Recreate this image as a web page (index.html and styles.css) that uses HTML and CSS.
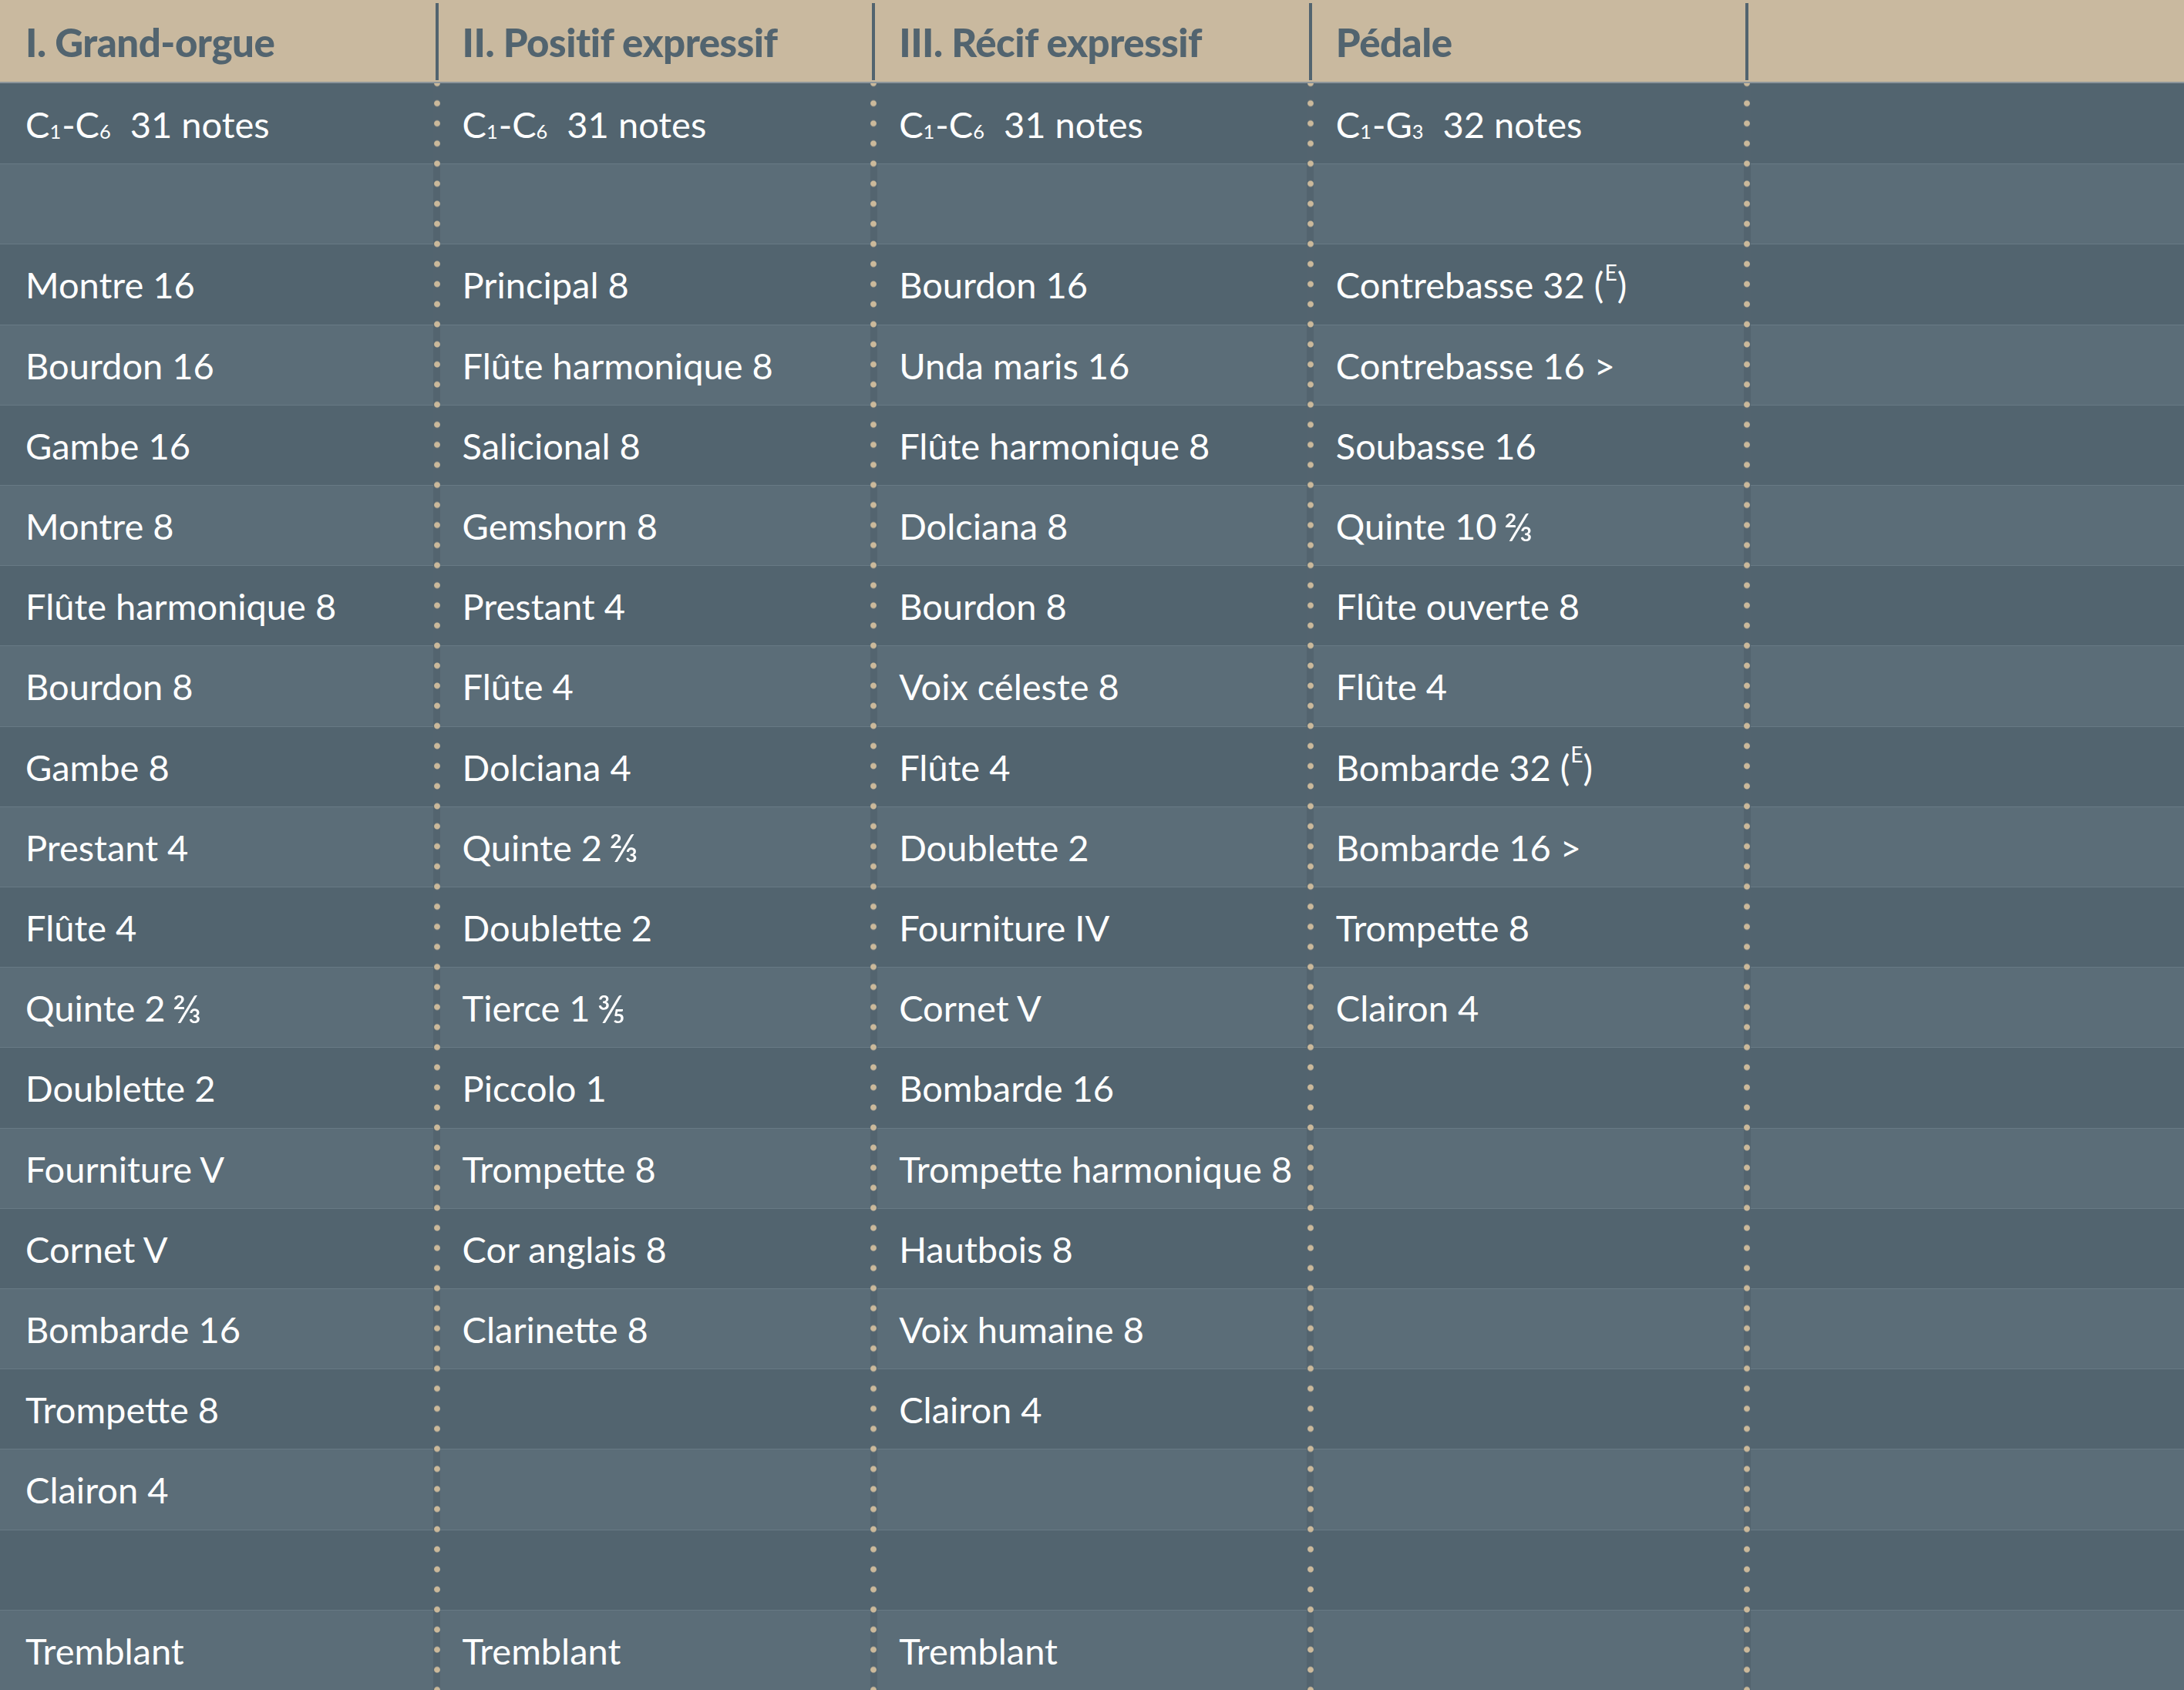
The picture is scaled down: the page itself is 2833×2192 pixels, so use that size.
FILE: index.html
```html
<!DOCTYPE html>
<html lang="fr">
<head>
<meta charset="utf-8">
<title>Composition de l'orgue</title>
<link rel="stylesheet" href="styles.css">
</head>
<body>
<div class="organ">
  <div class="head">
    <div class="hcell">I. Grand-orgue</div>
    <div class="hcell">II. Positif expressif</div>
    <div class="hcell">III. Récif expressif</div>
    <div class="hcell">Pédale</div>
    <div class="hcell"></div>
  </div>
  <div class="stops">
    <div class="row"><div class="cell">C<sub>1</sub>-C<sub>6</sub>&nbsp; 31 notes</div><div class="cell">C<sub>1</sub>-C<sub>6</sub>&nbsp; 31 notes</div><div class="cell">C<sub>1</sub>-C<sub>6</sub>&nbsp; 31 notes</div><div class="cell">C<sub>1</sub>-G<sub>3</sub>&nbsp; 32 notes</div><div class="cell"></div></div>
    <div class="row"><div class="cell"></div><div class="cell"></div><div class="cell"></div><div class="cell"></div><div class="cell"></div></div>
    <div class="row"><div class="cell">Montre 16</div><div class="cell">Principal 8</div><div class="cell">Bourdon 16</div><div class="cell">Contrebasse 32 (<sup>E</sup>)</div><div class="cell"></div></div>
    <div class="row"><div class="cell">Bourdon 16</div><div class="cell">Flûte harmonique 8</div><div class="cell">Unda maris 16</div><div class="cell">Contrebasse 16 &gt;</div><div class="cell"></div></div>
    <div class="row"><div class="cell">Gambe 16</div><div class="cell">Salicional 8</div><div class="cell">Flûte harmonique 8</div><div class="cell">Soubasse 16</div><div class="cell"></div></div>
    <div class="row"><div class="cell">Montre 8</div><div class="cell">Gemshorn 8</div><div class="cell">Dolciana 8</div><div class="cell">Quinte 10 <span class="frac">⅔</span></div><div class="cell"></div></div>
    <div class="row"><div class="cell">Flûte harmonique 8</div><div class="cell">Prestant 4</div><div class="cell">Bourdon 8</div><div class="cell">Flûte ouverte 8</div><div class="cell"></div></div>
    <div class="row"><div class="cell">Bourdon 8</div><div class="cell">Flûte 4</div><div class="cell">Voix céleste 8</div><div class="cell">Flûte 4</div><div class="cell"></div></div>
    <div class="row"><div class="cell">Gambe 8</div><div class="cell">Dolciana 4</div><div class="cell">Flûte 4</div><div class="cell">Bombarde 32 (<sup>E</sup>)</div><div class="cell"></div></div>
    <div class="row"><div class="cell">Prestant 4</div><div class="cell">Quinte 2 <span class="frac">⅔</span></div><div class="cell">Doublette 2</div><div class="cell">Bombarde 16 &gt;</div><div class="cell"></div></div>
    <div class="row"><div class="cell">Flûte 4</div><div class="cell">Doublette 2</div><div class="cell">Fourniture IV</div><div class="cell">Trompette 8</div><div class="cell"></div></div>
    <div class="row"><div class="cell">Quinte 2 <span class="frac">⅔</span></div><div class="cell">Tierce 1 <span class="frac">⅗</span></div><div class="cell">Cornet V</div><div class="cell">Clairon 4</div><div class="cell"></div></div>
    <div class="row"><div class="cell">Doublette 2</div><div class="cell">Piccolo 1</div><div class="cell">Bombarde 16</div><div class="cell"></div><div class="cell"></div></div>
    <div class="row"><div class="cell">Fourniture V</div><div class="cell">Trompette 8</div><div class="cell">Trompette harmonique 8</div><div class="cell"></div><div class="cell"></div></div>
    <div class="row"><div class="cell">Cornet V</div><div class="cell">Cor anglais 8</div><div class="cell">Hautbois 8</div><div class="cell"></div><div class="cell"></div></div>
    <div class="row"><div class="cell">Bombarde 16</div><div class="cell">Clarinette 8</div><div class="cell">Voix humaine 8</div><div class="cell"></div><div class="cell"></div></div>
    <div class="row"><div class="cell">Trompette 8</div><div class="cell"></div><div class="cell">Clairon 4</div><div class="cell"></div><div class="cell"></div></div>
    <div class="row"><div class="cell">Clairon 4</div><div class="cell"></div><div class="cell"></div><div class="cell"></div><div class="cell"></div></div>
    <div class="row"><div class="cell"></div><div class="cell"></div><div class="cell"></div><div class="cell"></div><div class="cell"></div></div>
    <div class="row"><div class="cell">Tremblant</div><div class="cell">Tremblant</div><div class="cell">Tremblant</div><div class="cell"></div><div class="cell"></div></div>
  </div>
</div>
</body>
</html>
```

FILE: styles.css
```css
html, body {
  margin: 0;
  padding: 0;
}

body {
  background: #52646f;
  font-family: "Lato", "Open Sans", sans-serif;
  overflow: hidden;
}

.organ {
  display: flex;
  flex-direction: column;
  width: 2833px;
  height: 2192px;
}

.head {
  height: 106px;
  flex: none;
  display: grid;
  grid-template-columns: repeat(5, 1fr);
  background-color: #c9b99f;
  border-bottom: 2px solid #8d959a;
  background-image:
    linear-gradient(#52646f, #52646f),
    linear-gradient(#52646f, #52646f),
    linear-gradient(#52646f, #52646f),
    linear-gradient(#52646f, #52646f);
  background-size: 4px 100px;
  background-repeat: no-repeat;
  background-position:
    564.6px 4px,
    1131.2px 4px,
    1697.8px 4px,
    2264.4px 4px;
}

.hcell {
  display: flex;
  align-items: center;
  padding-left: 33px;
  padding-top: 2px;
  font-weight: 900;
  font-size: 51px;
  letter-spacing: -0.5px;
  color: #52646f;
  white-space: nowrap;
}

.stops {
  flex: 1;
  position: relative;
  display: grid;
  grid-template-rows: repeat(20, 1fr);
}

.stops::after {
  content: "";
  position: absolute;
  inset: 0;
  pointer-events: none;
  background-image:
    radial-gradient(circle at 50% 50%, #cbb99b 3.4px, rgba(203, 185, 155, 0) 4.4px),
    radial-gradient(circle at 50% 50%, #cbb99b 3.4px, rgba(203, 185, 155, 0) 4.4px),
    radial-gradient(circle at 50% 50%, #cbb99b 3.4px, rgba(203, 185, 155, 0) 4.4px),
    radial-gradient(circle at 50% 50%, #cbb99b 3.4px, rgba(203, 185, 155, 0) 4.4px),
    linear-gradient(#53646f, #53646f),
    linear-gradient(#53646f, #53646f),
    linear-gradient(#53646f, #53646f),
    linear-gradient(#53646f, #53646f);
  background-size:
    10px 26.05px,
    10px 26.05px,
    10px 26.05px,
    10px 26.05px,
    9px 100%,
    9px 100%,
    9px 100%,
    9px 100%;
  background-repeat: repeat-y, repeat-y, repeat-y, repeat-y, no-repeat, no-repeat, no-repeat, no-repeat;
  background-position:
    561.6px -13.025px,
    1128.2px -13.025px,
    1694.8px -13.025px,
    2261.4px -13.025px,
    562.1px 0,
    1128.7px 0,
    1695.3px 0,
    2261.9px 0;
}

.row {
  display: grid;
  grid-template-columns: repeat(5, 1fr);
  background: #52646f;
  box-shadow: inset 0 1px 0 #687a85;
}

.row:nth-child(even) {
  background: #5b6d78;
}

.row:first-child {
  box-shadow: none;
}

.cell {
  display: flex;
  align-items: center;
  padding-left: 33px;
  padding-top: 2px;
  font-size: 47px;
  color: #ffffff;
  white-space: nowrap;
}

.cell sub {
  font-size: 0.54em;
  vertical-align: baseline;
  position: relative;
  top: 0.34em;
  line-height: 0;
  margin: 0 1px 0 0;
}

.cell sup {
  font-size: 0.6em;
  vertical-align: baseline;
  position: relative;
  top: -0.58em;
  line-height: 0;
  margin-left: 1px;
}

.frac {
  margin-left: 9px;
  font-size: 1.08em;
}
```
